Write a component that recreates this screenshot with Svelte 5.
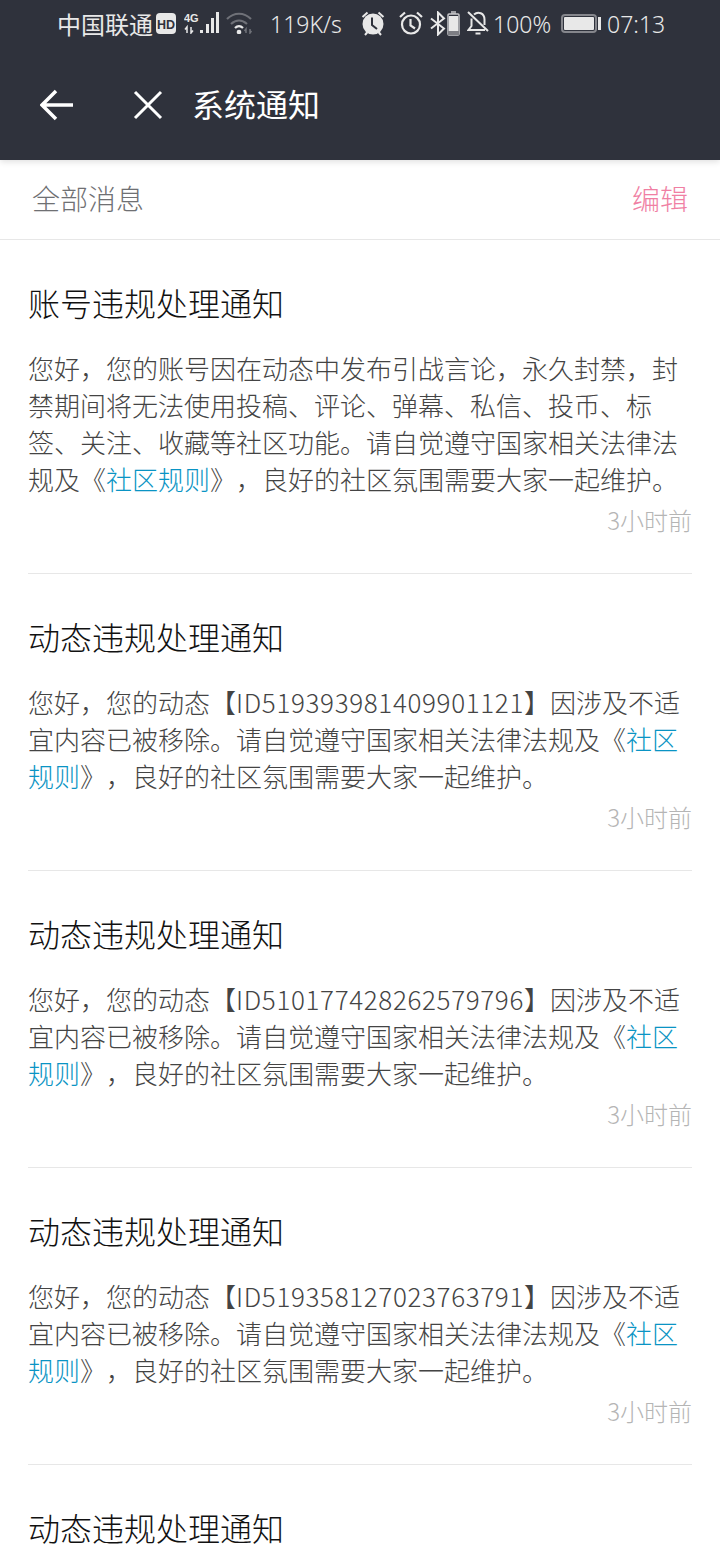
<script>
  const notices = [
    { title: '动态违规处理通知', id: '519393981409901121' },
    { title: '动态违规处理通知', id: '510177428262579796' },
    { title: '动态违规处理通知', id: '519358127023763791' }
  ];
</script>

<div class="page">
  <header class="top">
    <div class="status">
      <span class="carrier">中国联通</span>
      <svg class="hd" width="20" height="21" viewBox="0 0 20 21"><rect x="0" y="0" width="20" height="21" rx="4" fill="#e8e8e8" /><text x="10" y="15.500" text-anchor="middle" font-size="12.500" font-weight="700" fill="#2f323c" font-family="Liberation Sans">HD</text></svg>
      <svg class="sig" width="36" height="22" viewBox="0 0 36 22">
        <text x="0" y="10" font-size="11" font-weight="700" fill="#e8e8e8" font-family="Liberation Sans">4G</text>
        <path d="M3 21v-6l-2 2.500M7 15v6l2-2.500" stroke="#e8e8e8" stroke-width="1.500" fill="none" />
        <path d="M17.500 21v-3M23.500 21V12M28.500 21V6M33.500 21V0" stroke="#e8e8e8" stroke-width="3" />
      </svg>
      <svg class="wifi" width="27" height="22" viewBox="0 0 27 22" fill="none" stroke="#6f7178" stroke-width="2.200">
        <path d="M1 7c7-7 17-7 24 0M5 12c5-4.500 11-4.500 16 0" />
        <path d="M9 16c2.500-2.500 5.500-2.500 8 0" stroke="#e8e8e8" />
        <circle cx="13" cy="20" r="2.300" fill="#e8e8e8" stroke="none" />
        <path d="M20 21v-4l-1.500 2M24 17v4l1.500-2" stroke-width="1.500" />
      </svg>
      <span class="speed">119K/s</span>
      <svg class="clock" width="24" height="25" viewBox="0 0 24 25"><circle cx="12" cy="13" r="10.500" fill="#e8e8e8" /><path d="M1.500 6l5-4.500M22.500 6l-5-4.500M4 24l2.500-3M20 24l-2.500-3" stroke="#e8e8e8" stroke-width="2" /><path d="M11 6.500v7.500l5 4" stroke="#2f323c" stroke-width="2" fill="none" /></svg>
      <svg class="alarm" width="24" height="24" viewBox="0 0 24 24" fill="none" stroke="#e8e8e8" stroke-width="2.200"><circle cx="12" cy="13.500" r="9" /><path d="M1 6l5-4.500M23 6l-5-4.500M11.500 8v6.500l4.500 3" /></svg>
      <svg class="bt" width="16" height="25" viewBox="0 0 16 25" fill="none" stroke="#e8e8e8" stroke-width="2"><path d="M1 7.500l13 10-6 6V1.500l6 6-13 10" /></svg>
      <svg class="cell" width="13" height="25" viewBox="0 0 13 25"><rect x="4" y="0" width="5" height="3" fill="#a0a1a6" /><rect x="1" y="3" width="11" height="21" rx="1" fill="#2f323c" stroke="#c8c8ca" stroke-width="1.500" /><rect x="2" y="5" width="9" height="15" fill="#e8e8e8" /><rect x="1" y="20" width="11" height="4" fill="#7d7e84" /></svg>
      <svg class="mute" width="22" height="24" viewBox="0 0 22 24" fill="none" stroke="#e8e8e8" stroke-width="2"><path d="M1 1l20 19M4.500 7.500V15L1.500 19H18M7 3.500c4-3.500 10.500-1.500 10.500 5V14M8.500 22.500h5" /></svg>
      <span class="batt">100%</span>
      <div class="battery"><div class="fill"></div></div><div class="nub"></div>
      <span class="time">07:13</span>
    </div>
    <div class="nav">
      <svg class="back" width="34" height="32" viewBox="0 0 34 32" fill="none" stroke="#fff" stroke-width="3.500"><path d="M33 16H3M16 2L2 16l14 14" /></svg>
      <svg class="close" width="30" height="30" viewBox="0 0 30 30" fill="none" stroke="#fff" stroke-width="3"><path d="M2 2l26 26M28 2L2 28" /></svg>
      <span class="title">系统通知</span>
    </div>
  </header>

  <div class="filter">
    <span>全部消息</span>
    <span class="edit">编辑</span>
  </div>

  <div class="list">
    <section class="item">
      <h3>账号违规处理通知</h3>
      <p>您好，您的账号因在动态中发布引战言论，永久封禁，封禁期间将无法使用投稿、评论、弹幕、私信、投币、标签、关注、收藏等社区功能。请自觉遵守国家相关法律法规及《<a href="#rules">社区规则</a>》，良好的社区氛围需要大家一起维护。</p>
      <div class="when">3小时前</div>
    </section>
    {#each notices as n}
      <section class="item">
        <h3>{n.title}</h3>
        <p>您好，您的动态【<span class="id">ID{n.id}</span>】因涉及不适宜内容已被移除。请自觉遵守国家相关法律法规及《<a href="#rules">社区规则</a>》，良好的社区氛围需要大家一起维护。</p>
        <div class="when">3小时前</div>
      </section>
    {/each}
    <section class="item">
      <h3>动态违规处理通知</h3>
    </section>
  </div>
</div>

<style>
  :global(body) { margin: 0; background: #fff; }
  .page { width: 720px; height: 1560px; overflow: hidden; font-family: "Noto Sans CJK SC", "Noto Sans", sans-serif; text-spacing-trim: space-all; font-feature-settings: "chws" 0; }
  .top { background: #2f323c; height: 160px; box-shadow: 0 2px 6px rgba(0,0,0,.12); position: relative; }
  .status { height: 46px; padding: 0 0 4px 57px; display: flex; align-items: center; color: #e8e8e8; font-size: 24px; }
  .status > * { flex: none; }
  .carrier { width: 96px; }
  .hd { margin-left: 3px; }
  .sig { margin-left: 8px; }
  .wifi { margin-left: 6px; }
  .speed, .batt, .time { padding-top: 2px; font-family: "Noto Sans", sans-serif; font-weight: 300; font-size: 23px; }
  .speed { margin-left: 17px; width: 75px; }
  .clock { margin-left: 16px; }
  .alarm { margin-left: 14px; }
  .bt { margin-left: 7px; }
  .cell { margin-left: 1px; }
  .mute { margin-left: 7px; }
  .batt { margin-left: 4px; width: 60px; }
  .battery { margin-left: 8px; width: 36px; height: 19px; box-sizing: border-box; border: 2px solid #85868c; border-radius: 4px; display: flex; padding: 1px; }
  .fill { flex: 1; background: #e8e8e8; border-radius: 1px; }
  .nub { width: 3px; height: 13px; background: #e8e8e8; margin-left: 1px; }
  .time { margin-left: 6px; }
  .nav { height: 110px; display: flex; align-items: center; }
  .back { margin-left: 40px; }
  .close { margin-left: 59px; }
  .title { margin-left: 29px; padding-bottom: 4px; color: #fff; font-size: 32px; }
  .filter { height: 75px; padding: 0 32px 4px; border-bottom: 1px solid #e7e7e7; display: flex; justify-content: space-between; align-items: center; color: #6f7073; font-size: 28px; font-weight: 300; }
  .edit { color: #f07fa3; }
  .list { padding: 0 28px; }
  .item { border-bottom: 1px solid #e7e7e7; height: 296px; }
  .item:first-child { height: 333px; }
  h3 { margin: 0; padding-top: 39px; font-size: 32px; font-weight: 300; line-height: 46px; color: #111; }
  p { margin: 24px 0 0; font-size: 26px; line-height: 37px; color: #444; font-weight: 300; }
  .id { letter-spacing: .65px; }
  a { color: #0a94c4; text-decoration: none; }
  .when { margin-top: 4px; text-align: right; color: #b5b5b5; font-size: 24px; line-height: 37px; font-weight: 300; }
</style>
